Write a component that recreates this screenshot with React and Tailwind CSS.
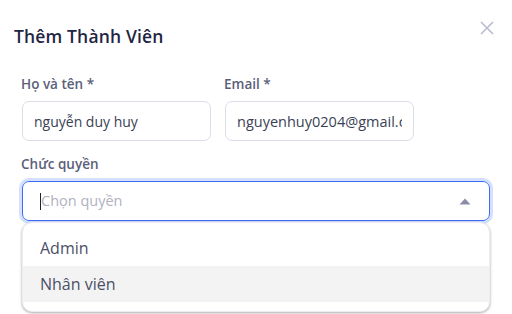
export default function App() {
    return (
        <div className="w-[512px] h-[314px] bg-white overflow-hidden" style={{ fontFamily: "'Open Sans', sans-serif" }}>
            <div className="flex items-center justify-between pl-[14px] pr-[18px] pt-[20px] h-[52px]">
                <p className="text-[17.5px] font-semibold text-[#1f2544] tracking-[0.15px]">Thêm Thành Viên</p>
                <svg width="14" height="14" viewBox="0 0 14 14" fill="none" stroke="#b9bbd0" strokeWidth="1.6" className="mb-[16px]">
                    <path d="M1 1l12 12M13 1L1 13" />
                </svg>
            </div>
            <div className="px-[22px] pt-[22px]">
                <div className="flex gap-[14px]">
                    <div className="flex flex-col w-[189px]">
                        <label className="text-[13.5px] font-semibold text-[#5b607a] mb-[7px] leading-[20px] -ml-[1px]">Họ và tên *</label>
                        <input
                            readOnly
                            value="nguyễn duy huy"
                            className="h-[40px] rounded-[7px] border border-[#dcdde8] px-[11px] text-[14px] text-[#3a3f55] outline-none"
                        />
                    </div>
                    <div className="flex flex-col w-[189px]">
                        <label className="text-[13.5px] font-semibold text-[#5b607a] mb-[7px] leading-[20px] -ml-[1px]">Email *</label>
                        <input
                            readOnly
                            value="nguyenhuy0204@gmail.com"
                            className="h-[40px] rounded-[7px] border border-[#dcdde8] px-[11px] text-[14.5px] text-[#3a3f55] outline-none"
                        />
                    </div>
                </div>
                <label className="block text-[13.5px] font-semibold text-[#5b607a] mt-[13px] mb-[7px] leading-[20px] -ml-[1px]">Chức quyền</label>
                <div className="relative">
                    <div className="h-[40px] rounded-[7px] border-[1.5px] border-[#3b6cf6] ring-[3px] ring-[#d4e0fd] px-[17px] flex items-center justify-between">
                        <div className="flex items-center">
                            <span className="w-[1px] h-[17px] bg-[#222]"></span>
                            <span className="text-[14.5px] text-[#b0b2bf]">Chọn quyền</span>
                        </div>
                        <svg width="12" height="7" viewBox="0 0 12 7" className="mr-[1px]">
                            <path d="M6 0.5L11.5 6.5H0.5Z" fill="#8b8da6" />
                        </svg>
                    </div>
                    <div className="absolute left-0 right-0 top-[41px] bg-white rounded-[10px] shadow-[0_1px_3px_rgba(0,0,0,0.35)] border border-[#ececf2] pt-[7px] pb-[9px]">
                        <div className="h-[36px] px-[17px] flex items-center text-[16px] text-[#4b4f66]">Admin</div>
                        <div className="h-[36px] px-[17px] flex items-center text-[16px] text-[#4b4f66] bg-[#f3f3f4]">Nhân viên</div>
                    </div>
                </div>
            </div>
        </div>
    );
}
